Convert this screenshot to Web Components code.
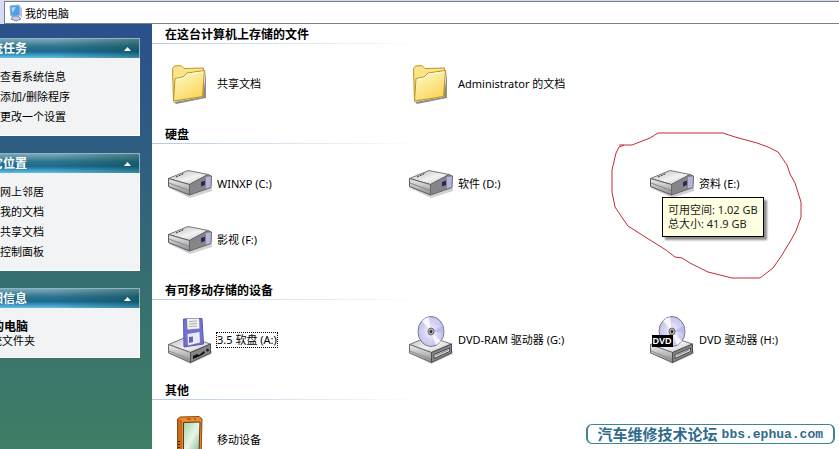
<!DOCTYPE html>
<html lang="zh-CN">
<head>
<meta charset="utf-8">
<title>我的电脑</title>
<style>
  html, body {
    height: 100%;
    margin: 0;
    overflow: hidden;
  }

  body {
    background: #fff;
    color: #000;
    font: 11px/14px "Noto Sans", "Noto Sans CJK SC", sans-serif;
  }
</style>
</head>
<body>

<explorer-window>
  <address-bar slot="address" value="我的电脑"></address-bar>

  <task-panel slot="tasks" heading="系统任务">
    <task-link>查看系统信息</task-link>
    <task-link>添加/删除程序</task-link>
    <task-link>更改一个设置</task-link>
  </task-panel>
  <task-panel slot="tasks" heading="其它位置">
    <task-link>网上邻居</task-link>
    <task-link>我的文档</task-link>
    <task-link>共享文档</task-link>
    <task-link>控制面板</task-link>
  </task-panel>
  <task-panel slot="tasks" heading="详细信息">
    <task-detail name="我的电脑">系统文件夹</task-detail>
  </task-panel>

  <item-group heading="在这台计算机上存储的文件">
    <item-tile icon="folder">共享文档</item-tile>
    <item-tile icon="folder">Administrator 的文档</item-tile>
  </item-group>
  <item-group heading="硬盘">
    <item-tile icon="drive">WINXP (C:)</item-tile>
    <item-tile icon="drive">软件 (D:)</item-tile>
    <item-tile icon="drive">资料 (E:)
      <info-tip slot="over">可用空间: 1.02 GB<br>总大小: 41.9 GB</info-tip>
      <pen-mark slot="over"></pen-mark>
    </item-tile>
    <item-tile icon="drive">影视 (F:)</item-tile>
  </item-group>
  <item-group heading="有可移动存储的设备">
    <item-tile icon="floppy" focused>3.5 软盘 (A:)</item-tile>
    <item-tile icon="disc">DVD-RAM 驱动器 (G:)</item-tile>
    <item-tile icon="dvd">DVD 驱动器 (H:)</item-tile>
  </item-group>
  <item-group heading="其他">
    <item-tile icon="pda">移动设备</item-tile>
  </item-group>

  <forum-stamp slot="stamp" site="bbs.ephua.com">汽车维修技术论坛</forum-stamp>
</explorer-window>

<script>
// gradients shared by every drive-like icon
const caseDefs = `
  <linearGradient id="top" x1="0" y1="0" x2="1" y2="1">
    <stop offset="0" stop-color="#b9b9bb"/>
    <stop offset=".55" stop-color="#f2f2f2"/>
    <stop offset="1" stop-color="#bdbdc0"/>
  </linearGradient>
  <linearGradient id="side" x1="0" y1="0" x2="0" y2="1">
    <stop offset="0" stop-color="#f0f0f0"/>
    <stop offset="1" stop-color="#8b8b8f"/>
  </linearGradient>
  <radialGradient id="cd" cx=".5" cy=".5" r=".6">
    <stop offset="0" stop-color="#f6f4fb"/>
    <stop offset=".5" stop-color="#d5d3f3"/>
    <stop offset="1" stop-color="#bcbdec"/>
  </radialGradient>`;

const box = `
  <path d="M4 37 L25 48 L47 38 L47 35 L4 33Z" fill="#000" opacity=".18"/>
  <path d="M3.500 28.500 L22.500 20.500 L45.500 28 L25.500 36.500Z" fill="url(#top)" stroke="#77777b"/>
  <path d="M3.500 28.500 L25.500 36.500 L25.500 46.500 L3.500 37Z" fill="url(#side)" stroke="#6b6b6f"/>
  <path d="M25.500 36.500 L45.500 28 L45.500 37 L25.500 46.500Z" fill="#85858a" stroke="#4b4b50"/>
  <path d="M4 35 L25 43.500" stroke="#8e8e92" fill="none"/>`;

const disc = `
  <ellipse cx="25" cy="15.500" rx="13" ry="15" fill="url(#cd)" stroke="#777a86"/>
  <path d="M25 15.500 L16 5 A13 15 0 0 1 23 1Z" fill="#fff" opacity=".8"/>
  <path d="M25 15.500 L35 25 A13 15 0 0 1 30 29Z" fill="#fff" opacity=".8"/>
  <path d="M25 15.500 L37 10 A13 15 0 0 1 38 17Z" fill="#a9a4ea" opacity=".5"/>
  <ellipse cx="25" cy="15.500" rx="3" ry="3.500" fill="#b9aeb4" stroke="#6d6470"/>
  <ellipse cx="25" cy="15.500" rx="1.200" ry="1.500" fill="#221d22"/>`;

const tray = `
  <path d="M28 38.500 L43.500 32 L43.500 35.500 L28 42.500Z" fill="#ddd" stroke="#444"/>
  <path d="M29.500 39.500 L42 34" stroke="#888" fill="none"/>`;

const icons = {
  folder: `
    <defs>
      <linearGradient id="front" x1="0" y1="0" x2=".6" y2="1">
        <stop offset="0" stop-color="#fffbd0"/>
        <stop offset="1" stop-color="#fbd75a"/>
      </linearGradient>
    </defs>
    <path d="M9 42 L38 37 L41 10 L41 38 L11 44Z" fill="#000" opacity=".45"/>
    <path d="M7.500 8.500 L9.500 6 L16 5.500 L19 8.500 L38.500 8 L38.500 36 L8.500 41Z" fill="#f9e586" stroke="#b9942a"/>
    <path d="M8.500 41 L10 18.500 L18 17 L22 13 L39.500 10.500 L37.500 36.500Z" fill="url(#front)" stroke="#b9942a"/>
    <path d="M11 19.500 L18.500 18 L22.500 14 L38 12" stroke="#fffde6" fill="none"/>`,
  drive: `
    <defs>${caseDefs}</defs>
    <path d="M4 28 L25 38 L47 31 L47 28 L4 24Z" fill="#000" opacity=".18"/>
    <path d="M3.500 18.500 L23 10.500 L43 14.500 L24.500 24.500Z" fill="url(#top)" stroke="#77777b"/>
    <path d="M3.500 18.500 L24.500 24.500 L24.500 35 L3.500 26.500Z" fill="url(#side)" stroke="#5c5c60"/>
    <path d="M24.500 24.500 L43 14.500 L46.500 16 L46 27.500 L24.500 35Z" fill="#85858a" stroke="#66666b"/>
    <path d="M41 17 L46 16.500 L45.500 27 L41 28.500Z" fill="#b6b3dc"/>
    <path d="M36 22 L40 20.500 L40 25 L36 26.500Z" fill="#2b2b50"/>
    <path d="M4 23 L24 30.500" stroke="#88888c" fill="none"/>
    <path d="M11 17 L19 13.500" stroke="#333" stroke-dasharray="2 1" fill="none"/>`,
  floppy: `
    <defs>${caseDefs}</defs>
    ${box}
    <path d="M28 40 L32 38 L34 39 L39 35 L40 37 L35 40 L28 43Z" fill="#111"/>
    <circle cx="42.500" cy="34" r="1.500" fill="#222"/>
    <path d="M18.500 3 L37 2.500 L38.500 28 L19 31Z" fill="#7472cf" stroke="#5a57b0"/>
    <path d="M22 3 L34 2.500 L34.500 12.500 L22.500 13.500Z" fill="#f4f3e6"/>
    <path d="M24 5.500 L32 5 M24 8 L32 7.500 M24 10.500 L32 10" stroke="#a9a9b0" fill="none"/>
    <path d="M22.500 18 L34.500 16 L35 26.500 L23 29.500Z" fill="#e9eaf4"/>
    <path d="M24 21 L28 20.500 L28 26 L24 27Z" fill="#6462b8"/>`,
  disc: `<defs>${caseDefs}</defs>${box}${tray}${disc}`,
  dvd: `
    <defs>${caseDefs}</defs>
    ${box}${tray}${disc}
    <rect x="5" y="19" width="21" height="12" fill="#000"/>
    <text x="15" y="28" text-anchor="middle" font-family="Liberation Sans" font-size="9" font-weight="bold" fill="#fff">DVD</text>`,
  pda: `
    <defs>
      <linearGradient id="screen" x1="0" y1="0" x2="1" y2="1">
        <stop offset="0" stop-color="#9fd3a8"/>
        <stop offset=".5" stop-color="#eaf6e6"/>
        <stop offset="1" stop-color="#7cb892"/>
      </linearGradient>
    </defs>
    <path d="M12.500 3 L15 1 L34 .5 L37 3 L36 46 L15 46 L12.500 44Z" fill="#ec8a2e" stroke="#8a4a12"/>
    <path d="M13 3 L17 4 L17 46 L13 44Z" fill="#c8691c"/>
    <path d="M18.500 6.500 L35 6 L34 38 L18.500 38Z" fill="url(#screen)" stroke="#5b3a17"/>
    <path d="M22 3 H26 M29 3 H31" stroke="#7b3e0c" fill="none"/>
    <path d="M14 25 V42" stroke="#42210a" stroke-dasharray="1 2" stroke-width="2"/>`,
};

customElements.define('explorer-window', class extends HTMLElement {
  constructor() {
    super();
    this.attachShadow({ mode: 'open' }).innerHTML = `
      <style>
        :host {
          display: grid;
          grid-template: auto 1fr / 152px 1fr;
          position: relative;
          height: 100vh;
          overflow: hidden;
        }
        header { grid-column: 1 / -1; }
        aside {
          display: flex;
          flex-direction: column;
          gap: 17px;
          padding: 14px 12px 0 0;
          overflow: hidden;
          background: linear-gradient(#2a508b, #2e5d80 30%, #366f70 62%, #407e65);
        }
        main { min-height: 0; overflow: hidden; }
      </style>
      <header><slot name="address"></slot></header>
      <aside><slot name="tasks"></slot></aside>
      <main><slot></slot></main>
      <slot name="stamp"></slot>`;
  }
});

customElements.define('address-bar', class extends HTMLElement {
  constructor() {
    super();
    this.attachShadow({ mode: 'open' }).innerHTML = `
      <style>
        :host {
          display: flex;
          height: 24px;
          box-sizing: border-box;
          padding: 1px 0 0 4px;
          background: #d5dcf6;
        }
        label {
          display: flex;
          flex: 1;
          align-items: center;
          gap: 1px;
          padding-left: 3px;
          border: 1px solid #7b8187;
          border-right: 0;
          background: #fff;
        }
        input {
          flex: 1;
          padding: 2px 0 0;
          border: 0;
          outline: 0;
          background: none;
          color: inherit;
          font: inherit;
        }
      </style>
      <label>
        <svg width="16" height="18" viewBox="0 0 16 18" aria-hidden="true">
          <path d="M2 2 L11 1 L12 11 L3 12Z" fill="#4aa3e8" stroke="#8fa9cf"/>
          <path d="M3.500 3.500 L8 3 L4.500 9Z" fill="#a8dcfb"/>
          <path d="M12 2 L14 4 L14 14 L12 12Z" fill="#b9c1e0"/>
          <path d="M5 12 L10 12 L13 15 L8 17 L3 15Z" fill="#c6cbe4" stroke="#8088b4"/>
        </svg>
        <input type="text" aria-label="地址">
      </label>`;
    this.shadowRoot.querySelector('input').value = this.getAttribute('value');
  }
});

customElements.define('task-panel', class extends HTMLElement {
  constructor() {
    super();
    this.attachShadow({ mode: 'open' }).innerHTML = `
      <style>
        /* the pane is scrolled sideways, so each panel starts left of it */
        :host { display: block; margin-left: -33px; }
        header {
          display: flex;
          align-items: center;
          justify-content: space-between;
          height: 20px;
          padding: 0 7px 0 12px;
          border: solid #8fb5c0;
          border-width: 1px 1px 0 0;
          box-sizing: border-box;
          background:
            linear-gradient(90deg, transparent 50%, rgba(0, 60, 60, .4)),
            linear-gradient(#7aa9bb, #2f758c 40%, #1b6a93 65%, #5fc0e6);
          color: #fff;
        }
        h2 { margin: 0; font-size: 12px; line-height: 18px; }
        button {
          display: flex;
          padding: 0;
          border: 0;
          background: none;
        }
        div {
          padding: 9px 0 8px 33px;
          border: solid #fff;
          border-width: 0 1px 1px 0;
          background: #f1f3f4;
        }
      </style>
      <header>
        <h2></h2>
        <button type="button" aria-label="折叠">
          <svg width="9" height="6" viewBox="0 0 9 6"><path d="M4.500 1 L8 5 H1Z" fill="#fff"/></svg>
        </button>
      </header>
      <div><slot></slot></div>`;
    this.shadowRoot.querySelector('h2').textContent = this.getAttribute('heading');
  }
});

customElements.define('task-link', class extends HTMLElement {
  constructor() {
    super();
    this.attachShadow({ mode: 'open' }).innerHTML = `
      <style>
        :host { display: block; line-height: 20px; white-space: nowrap; }
        a { color: inherit; text-decoration: none; }
      </style>
      <a href="#"><slot></slot></a>`;
  }
});

customElements.define('task-detail', class extends HTMLElement {
  constructor() {
    super();
    this.attachShadow({ mode: 'open' }).innerHTML = `
      <style>
        :host { display: block; margin-left: -20px; padding: 3px 0 1px; }
        strong { display: block; font-size: 12px; }
      </style>
      <strong></strong>
      <slot></slot>`;
    this.shadowRoot.querySelector('strong').textContent = this.getAttribute('name');
  }
});

customElements.define('item-group', class extends HTMLElement {
  constructor() {
    super();
    this.attachShadow({ mode: 'open' }).innerHTML = `
      <style>
        :host { display: block; margin-bottom: 12px; }
        h2 {
          height: 20px;
          margin: 0 0 12px;
          padding-left: 13px;
          box-sizing: border-box;
          background: linear-gradient(90deg, #b4cae8, #fff 270px) bottom / 100% 1px no-repeat;
          font-size: 12px;
          line-height: 22px;
        }
        div {
          display: grid;
          grid-template-columns: repeat(3, 241px);
          grid-auto-rows: 56px;
          padding-left: 13px;
        }
      </style>
      <h2></h2>
      <div><slot></slot></div>`;
    this.shadowRoot.querySelector('h2').textContent = this.getAttribute('heading');
  }
});

customElements.define('item-tile', class extends HTMLElement {
  constructor() {
    super();
    this.attachShadow({ mode: 'open' }).innerHTML = `
      <style>
        :host { display: flex; align-items: center; position: relative; }
        button {
          display: flex;
          align-items: center;
          gap: 3px;
          padding: 0;
          border: 0;
          background: none;
          color: inherit;
          font: inherit;
          white-space: nowrap;
        }
        span { border: 1px solid transparent; }
        :host([focused]) span { border: 1px dotted #000; }
      </style>
      <button type="button">
        <svg width="48" height="48" viewBox="0 0 48 48" aria-hidden="true">${icons[this.getAttribute('icon')]}</svg>
        <span><slot></slot></span>
      </button>
      <slot name="over"></slot>`;
  }
});

customElements.define('info-tip', class extends HTMLElement {
  constructor() {
    super();
    this.attachShadow({ mode: 'open' }).innerHTML = `
      <style>
        :host {
          display: block;
          position: absolute;
          left: 15px;
          top: 41px;
          padding: 5px;
          border: 1px solid #000;
          background: #ffffe1;
          box-shadow: 3px 3px 2px rgba(0, 0, 0, .45);
          color: #222;
          white-space: nowrap;
        }
      </style>
      <slot></slot>`;
  }
});

customElements.define('pen-mark', class extends HTMLElement {
  constructor() {
    super();
    this.attachShadow({ mode: 'open' }).innerHTML = `
      <style>
        :host { display: block; position: absolute; left: -37px; top: -24px; pointer-events: none; }
        svg { display: block; }
      </style>
      <svg width="194" height="150" viewBox="610 132 194 150" aria-hidden="true">
        <path d="M619 145 L632 145 L650 138 L658 133 L723 133 L735 137 L757 143 L768 147 L778 152 L787 165
          L790 174 L795 183 L801 202 L801 217 L796 231 L791 240 L782 255 L773 268 L760 278 L732 278 L708 272
          L690 263 L682 258 L675 257 L666 250 L650 240 L628 226 L621 216 L615 207 L612 192 L612 170 L616 153
          L619 147 L624 145" fill="none" stroke="#c42a35"/>
      </svg>`;
  }
});

customElements.define('forum-stamp', class extends HTMLElement {
  constructor() {
    super();
    this.attachShadow({ mode: 'open' }).innerHTML = `
      <style>
        :host {
          display: flex;
          align-items: center;
          gap: 4px;
          position: absolute;
          right: 4px;
          bottom: 5px;
          height: 18px;
          padding: 0 10px;
          border: 1px solid #3f8790;
          border-width: 1px 2px;
          border-radius: 6px;
          color: #2f6c8c;
          font-size: 15px;
          font-weight: bold;
        }
        b { font: bold 13px "Liberation Mono", monospace; }
      </style>
      <slot></slot><b></b>`;
    this.shadowRoot.querySelector('b').textContent = this.getAttribute('site');
  }
});
</script>
</body>
</html>
